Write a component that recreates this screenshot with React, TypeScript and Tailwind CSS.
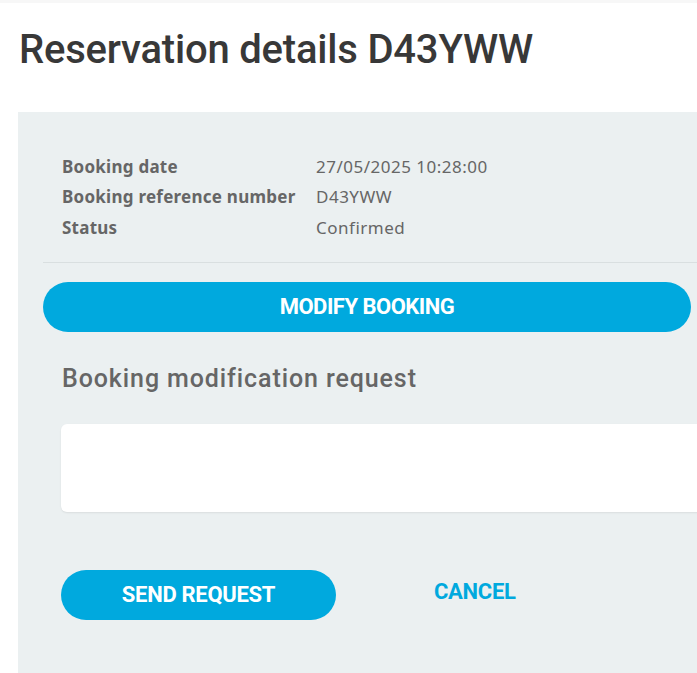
import React from "react";

const rows: [string, string][] = [
  ["Booking date", "27/05/2025 10:28:00"],
  ["Booking reference number", "D43YWW"],
  ["Status", "Confirmed"],
];

export default function App() {
  return (
    <div className="w-[697px] h-[673px] overflow-hidden bg-white" style={{ fontFamily: "Roboto, sans-serif" }}>
      <div className="h-[3px] bg-[#f7f7f7]" />
      <h1 className="pl-[19px] pt-[22px] text-[40px] leading-[50px] font-medium text-[#383838] tracking-[-0.2px]">
        Reservation details D43YWW
      </h1>
      <div className="ml-[18px] mt-[37px] w-[720px] h-[600px] bg-[#ebf0f1] pt-[39px]">
        <div className="pl-[44px] flex flex-col text-[17px] tracking-[0.25px] text-[#666]" style={{ fontFamily: "'Noto Sans', sans-serif" }}>
          {rows.map(([k, v]) => (
            <div key={k} className="flex h-[30.5px] items-center">
              <div className="w-[254px] font-bold">{k}</div>
              <div className="tracking-[0.5px]">{v}</div>
            </div>
          ))}
        </div>
        <div className="ml-[25px] mt-[19px] h-px bg-[#d9dfe0]" />
        <button className="ml-[25px] mt-[19px] w-[648px] h-[50px] rounded-full bg-[#00a9de] text-white text-[22px] font-bold tracking-[-0.5px]">
          MODIFY BOOKING
        </button>
        <h2 className="ml-[44px] mt-[32px] text-[25px] leading-[30px] font-medium text-[#666] tracking-[0.9px]">
          Booking modification request
        </h2>
        <div className="ml-[43px] mt-[30px] w-[660px] h-[88px] rounded-[6px] bg-white shadow-[0_1px_2px_rgba(0,0,0,0.08)]" />
        <div className="ml-[43px] mt-[58px] flex items-center">
          <button className="w-[275px] h-[50px] rounded-full bg-[#00a9de] text-white text-[22px] font-bold tracking-[-0.3px]">
            SEND REQUEST
          </button>
          <button className="ml-[98px] -mt-[6px] text-[22px] font-bold text-[#00a9de] tracking-[-0.3px]">CANCEL</button>
        </div>
      </div>
    </div>
  );
}
